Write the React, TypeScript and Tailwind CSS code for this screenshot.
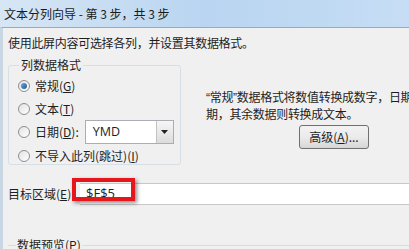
import React from 'react'

const font = { fontFamily: '"Noto Sans CJK SC", "Noto Sans", sans-serif' }

function Radio({ checked }: { checked?: boolean }) {
  return (
    <span className="relative inline-flex items-center justify-center w-[12px] h-[12px] rounded-full border border-[#8f8f8f] bg-gradient-to-br from-[#e2e2e2] to-[#ffffff] shrink-0">
      {checked && (
        <span className="w-[6px] h-[6px] rounded-full bg-gradient-to-br from-[#6aa8e0] to-[#1d5b97]" />
      )}
    </span>
  )
}

function RadioRow({ checked, label, hotkey, suffix }: {
  checked?: boolean
  label: string
  hotkey: string
  suffix?: string
}) {
  return (
    <div className="flex items-center gap-[5px] h-[23px] whitespace-nowrap shrink-0">
      <Radio checked={checked} />
      <span>
        {label}(<span className="underline">{hotkey}</span>){suffix}
      </span>
    </div>
  )
}

export default function App() {
  return (
    <div className="w-[409px] h-[249px] overflow-hidden flex flex-col text-[12px] text-[#1e1e1e]" style={font}>
      {/* Title bar */}
      <div className="h-[27px] shrink-0 flex items-center pl-[4px] bg-gradient-to-r from-[#d7e6f4] via-[#b9d5f1] to-[#c6ddf5] text-[12px] text-[#1b1b1b] whitespace-pre">
        文本分列向导 - 第 3 步，共 3 步
      </div>

      {/* Body */}
      <div className="flex-1 flex flex-col bg-[#f0f0f0] border-t border-[#a7a7a7] border-l-[3px] border-l-[#c9d6e3]">
        <p className="mt-[7px] ml-[5px] leading-[16px] tracking-[-0.3px] whitespace-nowrap">
          使用此屏内容可选择各列，并设置其数据格式。
        </p>

        <div className="flex mt-[7px]">
          <fieldset className="ml-[5px] w-[173px] min-w-[173px] shrink-0 h-[107px] border border-[#d5dfe5] rounded-[3px] px-[9px] pt-[2px]">
            <legend className="px-[2px] ml-[1px] leading-[14px]">列数据格式</legend>
            <RadioRow checked label="常规" hotkey="G" />
            <RadioRow label="文本" hotkey="T" />
            <div className="flex items-center">
              <RadioRow label="日期" hotkey="D" suffix=":" />
              <div className="ml-[6px] w-[89px] h-[24px] shrink-0 bg-white border border-[#abadb3] flex items-center">
                <span className="flex-1 pl-[7px] text-[12.5px]" style={{ fontFamily: '"Open Sans", sans-serif' }}>YMD</span>
                <span className="w-[17px] h-[22px] border-l border-[#c3c3c3] bg-gradient-to-b from-[#f6f6f6] to-[#dcdcdc] flex items-center justify-center">
                  <svg width="7" height="4" viewBox="0 0 7 4"><path d="M0 0h7L3.5 4z" fill="#222" /></svg>
                </span>
              </div>
            </div>
            <RadioRow label="不导入此列(跳过)" hotkey="I" />
          </fieldset>

          <div className="ml-[25px] flex flex-col">
            <p className="mt-[31px] leading-[16px] whitespace-nowrap tracking-[-0.3px]">
              <span style={{ fontFamily: '"Liberation Sans", sans-serif' }}>“</span>常规<span style={{ fontFamily: '"Liberation Sans", sans-serif' }}>”</span>数据格式将数值转换成数字，日期值会转换成日
            </p>
            <p className="leading-[16px] whitespace-nowrap tracking-[-0.3px]">期，其余数据则转换成文本。</p>
            <button className="ml-[93px] mt-[3px] w-[70px] h-[24px] rounded-[3px] border border-[#707070] bg-gradient-to-b from-[#f2f2f2] via-[#ebebeb] to-[#d6d6d6] text-[12px]">
              高级(<span className="underline">A</span>)...
            </button>
          </div>
        </div>

        {/* Target row */}
        <div className="relative flex items-center mt-[17px] h-[23px]">
          <span className="ml-[5px] w-[72px] shrink-0 whitespace-nowrap">
            目标区域(<span className="underline">E</span>):
          </span>
          <div className="flex-1 h-[22px] bg-white border-t border-b border-[#c8c8c8] flex items-center pl-[6px] text-[13px]" style={{ fontFamily: '"Open Sans", sans-serif' }}>
            $F$5
          </div>
          <div className="absolute left-[69px] top-[-4px] w-[63px] h-[23px] border-[4px] border-[#e4171c] shadow-[2px_2px_4px_rgba(0,0,0,0.45)]" />
        </div>

        {/* Preview group */}
        <fieldset className="mt-[33px] ml-[5px] mr-[-4px] border-t border-[#dcdcdc] px-[8px]">
          <legend className="px-[1px] leading-[14px]">
            数据预览(<span className="underline">P</span>)
          </legend>
        </fieldset>
      </div>
    </div>
  )
}
